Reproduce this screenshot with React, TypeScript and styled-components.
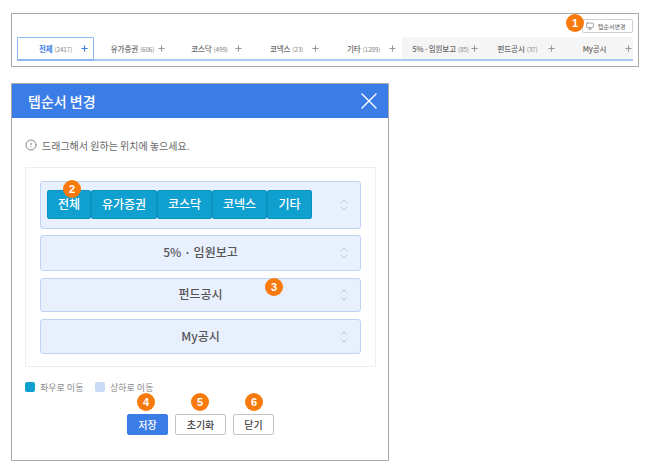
import React from "react";
import styled, { createGlobalStyle } from "styled-components";
import { Monitor, X, Plus, AlertCircle } from "lucide-react";

const GlobalStyle = createGlobalStyle`
  html, body {
    margin: 0;
    padding: 0;
    background: #fff;
    font-family: "Noto Sans CJK KR", "Noto Sans", sans-serif;
  }

  * {
    box-sizing: border-box;
  }
`;

const Page = styled.div`
  width: 648px;
  height: 472px;
  padding: 13px 0 0 11px;
  overflow: hidden;
`;

const TabPanel = styled.section`
  width: 628px;
  height: 54px;
  padding: 5px 5px 0 5px;
  border: 1px solid #a8a8a8;
`;

const TabToolbar = styled.div`
  display: flex;
  justify-content: flex-end;
  height: 18px;
`;

const OrderButton = styled.button`
  position: relative;
  display: flex;
  align-items: center;
  gap: 4px;
  width: 51px;
  height: 14px;
  padding: 0 0 0 3px;
  border: 1px solid #cfcfcf;
  border-radius: 2px;
  background: #fff;
  color: #666;
  font-family: inherit;
  font-size: 6px;
  white-space: nowrap;
`;

const TabBar = styled.div`
  display: grid;
  grid-template-columns: repeat(8, 77px);
  height: 24px;
  border-bottom: 2px solid #a9c9f3;
`;

const Tab = styled.div<{ $active?: boolean; $muted?: boolean }>`
  display: grid;
  grid-template-columns: 1fr auto 1fr;
  align-items: center;
  height: ${(p) => (p.$active ? "24px" : "22px")};
  border: ${(p) => (p.$active ? "1px solid #8fb8f0" : "none")};
  border-bottom-width: ${(p) => (p.$active ? "2px" : "0")};
  border-radius: 1px;
  background: ${(p) => (p.$muted ? "#f5f5f5" : "transparent")};
  color: ${(p) => (p.$active ? "#3b7de6" : "#666")};
  font-size: 7.5px;
  font-weight: ${(p) => (p.$active ? 700 : 500)};
  letter-spacing: -0.1px;
  word-spacing: -1px;
  white-space: nowrap;
`;

const TabLabel = styled.span`
  grid-column: 2;
`;

const TabCount = styled.span`
  margin-left: 2px;
  color: #888;
  font-size: 6.5px;
  font-weight: 400;
  letter-spacing: -0.2px;
`;

const TabPlus = styled(Plus)<{ $inset: number }>`
  grid-column: 3;
  justify-self: end;
  margin-right: ${(p) => p.$inset}px;
`;

const Modal = styled.section`
  display: flex;
  flex-direction: column;
  width: 378px;
  height: 378px;
  margin-top: 16px;
  border: 1px solid #a8a8a8;
`;

const ModalHeader = styled.header`
  display: flex;
  align-items: center;
  justify-content: space-between;
  flex: none;
  height: 34px;
  padding: 0 5px 0 16px;
  background: #3b7de6;
  color: #fff;
  font-size: 14px;
  font-weight: 500;
`;

const ModalBody = styled.div`
  flex: 1;
  padding: 19px 12px 0 13px;
`;

const Notice = styled.p`
  display: flex;
  align-items: center;
  gap: 5px;
  height: 16px;
  margin: 0 0 14px;
  color: #666;
  font-size: 10px;
`;

const OrderPanel = styled.div`
  display: flex;
  flex-direction: column;
  height: 200px;
  padding: 13px 14px 0;
  border: 1px solid #eee;
`;

const OrderRow = styled.div<{ $height: number; $gap: number }>`
  position: relative;
  display: flex;
  align-items: center;
  justify-content: center;
  flex: none;
  height: ${(p) => p.$height}px;
  margin-bottom: ${(p) => p.$gap}px;
  padding-bottom: 3px;
  border: 1px solid #bfd4f5;
  border-radius: 3px;
  background: #e9f0fd;
  color: #555;
  font-size: 12px;
  font-weight: 500;
`;

const ChipRow = styled.div`
  display: flex;
  align-self: flex-start;
  margin: 8px 0 0 6px;
  width: 100%;
`;

const Chip = styled.div<{ $width: number }>`
  position: relative;
  display: flex;
  align-items: center;
  justify-content: center;
  width: ${(p) => p.$width}px;
  height: 29px;
  padding-bottom: 2px;
  border-radius: 3px;
  background: #0fa0cf;
  box-shadow: inset 0 0 0 1px #0c92bf;
  color: #fff;
  font-size: 12px;
  font-weight: 500;
`;

const RowHandle = styled.svg`
  position: absolute;
  top: 50%;
  right: 12px;
  width: 8px;
  height: 12px;
  margin-top: -6px;
  fill: none;
  stroke: #c4c4c4;
  stroke-width: 1;
`;

const Legend = styled.div`
  display: flex;
  align-items: center;
  height: 12px;
  margin-top: 14px;
  color: #888;
  font-size: 9px;
`;

const LegendSwatch = styled.span<{ $color: string }>`
  flex: none;
  width: 10px;
  height: 10px;
  margin-right: 5px;
  border-radius: 2px;
  background: ${(p) => p.$color};
`;

const LegendLabel = styled.span`
  width: 55px;
`;

const ActionBar = styled.div`
  display: flex;
  justify-content: center;
  gap: 7px;
  margin-top: 21px;
`;

const ActionButton = styled.button<{ $primary?: boolean; $width: number }>`
  position: relative;
  width: ${(p) => p.$width}px;
  height: 21px;
  padding: 0;
  border: 1px solid ${(p) => (p.$primary ? "#3b7de6" : "#c4c4c4")};
  border-radius: 2px;
  background: ${(p) => (p.$primary ? "#3b7de6" : "#fff")};
  color: ${(p) => (p.$primary ? "#fff" : "#444")};
  font-family: inherit;
  font-size: 10px;
  font-weight: 500;
`;

const Badge = styled.span<{ $left: number; $top: number }>`
  position: absolute;
  left: ${(p) => p.$left}px;
  top: ${(p) => p.$top}px;
  display: flex;
  align-items: center;
  justify-content: center;
  width: 18px;
  height: 18px;
  border-radius: 50%;
  background: #f97a0c;
  color: #fff;
  font-family: "Liberation Sans", sans-serif;
  font-size: 11px;
  font-weight: 700;
`;

const tabs = [
  { label: "전체", count: 2417, inset: 4 },
  { label: "유가증권", count: 606, inset: 5 },
  { label: "코스닥", count: 499, inset: 5 },
  { label: "코넥스", count: 23, inset: 5 },
  { label: "기타", count: 1289, inset: 5 },
  { label: "5% · 임원보고", count: 85, inset: 0, muted: true },
  { label: "펀드공시", count: 37, inset: 0, muted: true },
  { label: "My공시", inset: 0, muted: true }
];

const chips = [
  { label: "전체", width: 44 },
  { label: "유가증권", width: 66 },
  { label: "코스닥", width: 55 },
  { label: "코넥스", width: 55 },
  { label: "기타", width: 45 }
];

const Handle = () => (
  <RowHandle viewBox="0 0 8 12">
    <path d="M1 4 L4 1 L7 4" />
    <path d="M1 8 L4 11 L7 8" />
  </RowHandle>
);

const App = () => (
  <Page>
    <GlobalStyle />

    <TabPanel>
      <TabToolbar>
        <OrderButton>
          <Badge $left={-17} $top={-6}>1</Badge>
          <Monitor size={8} color="#777" />
          텝순서변경
        </OrderButton>
      </TabToolbar>

      <TabBar>
        {tabs.map((tab, index) => (
          <Tab key={tab.label} $active={index === 0} $muted={tab.muted}>
            <TabLabel>
              {tab.label}
              {tab.count !== undefined && <TabCount>({tab.count})</TabCount>}
            </TabLabel>
            <TabPlus
              $inset={tab.inset}
              size={9}
              strokeWidth={3}
              color={index === 0 ? "#3b7de6" : "#999"}
            />
          </Tab>
        ))}
      </TabBar>
    </TabPanel>

    <Modal>
      <ModalHeader>
        텝순서 변경
        <X size={28} strokeWidth={1.2} color="#fff" />
      </ModalHeader>

      <ModalBody>
        <Notice>
          <AlertCircle size={12} color="#888" />
          드래그해서 원하는 위치에 놓으세요.
        </Notice>

        <OrderPanel>
          <OrderRow $height={48} $gap={6}>
            <ChipRow>
              {chips.map((chip, index) => (
                <Chip key={chip.label} $width={chip.width}>
                  {index === 0 && <Badge $left={16} $top={-10}>2</Badge>}
                  {chip.label}
                </Chip>
              ))}
            </ChipRow>
            <Handle />
          </OrderRow>
          <OrderRow $height={36} $gap={7}>
            5% · 임원보고
            <Handle />
          </OrderRow>
          <OrderRow $height={34} $gap={7}>
            펀드공시
            <Badge $left={224} $top={-1}>3</Badge>
            <Handle />
          </OrderRow>
          <OrderRow $height={35} $gap={0}>
            My공시
            <Handle />
          </OrderRow>
        </OrderPanel>

        <Legend>
          <LegendSwatch $color="#0fa0cf" />
          <LegendLabel>좌우로 이동</LegendLabel>
          <LegendSwatch $color="#c9dbf7" />
          <LegendLabel>상하로 이동</LegendLabel>
        </Legend>

        <ActionBar>
          <ActionButton $primary $width={41}>
            <Badge $left={9} $top={-22}>4</Badge>
            저장
          </ActionButton>
          <ActionButton $width={51}>
            <Badge $left={15} $top={-22}>5</Badge>
            초기화
          </ActionButton>
          <ActionButton $width={41}>
            <Badge $left={11} $top={-22}>6</Badge>
            닫기
          </ActionButton>
        </ActionBar>
      </ModalBody>
    </Modal>
  </Page>
);

export default App;
